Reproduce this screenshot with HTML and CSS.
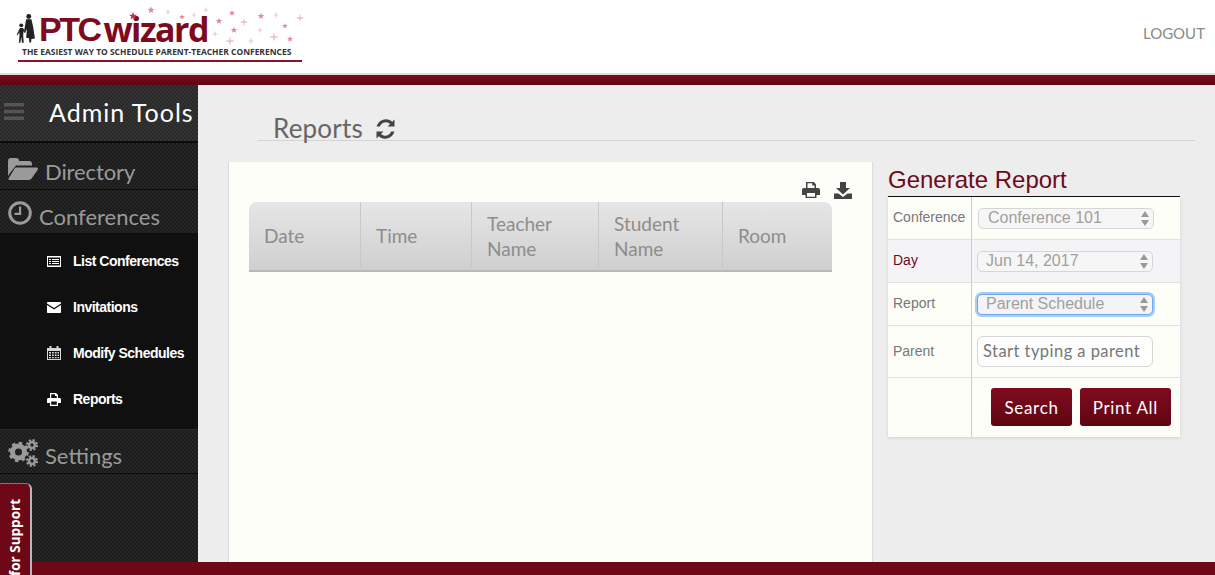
FILE: index.html
```html
<!DOCTYPE html>
<html lang="en">
<head>
<meta charset="utf-8">
<title>PTC Wizard Reports</title>
<link rel="stylesheet" href="styles.css">
</head>
<body>
<svg class="defs" width="0" height="0" aria-hidden="true">
  <defs>
    <path id="star" d="M0-5 1.400-1.700 5-1.500 2.200.8 3.100 4.300 0 2.400-3.100 4.300-2.200.8-5-1.500-1.400-1.700Z"/>
    <path id="plus" d="M-.5-4H.5V-.5H4V.5H.5V4H-.5V.5H-4V-.5H-.5Z"/>
  </defs>
</svg>
<header class="topbar">
  <div class="logo">
    <div class="logo-main">
      <svg class="logo-people" viewBox="0 0 24 34" width="22" height="30" aria-hidden="true">
        <circle cx="14" cy="4" r="2.800" fill="#222"/>
        <path d="M11 7h6l2 9 2 13-4 .4-.4 4.100h-2l-.3-5-3.300-.5 1-10-1.800 3.500-1.500-.8Z" fill="#222"/>
        <circle cx="5.500" cy="14" r="2.200" fill="#222"/>
        <path d="M4 17h3.500l3 5-1 .8-1.500-2-.3 5 .6 8H6.300l-.8-7-1 7H2.800l.7-9-.2-3-2 3.500-1-.7Z" fill="#222"/>
      </svg>
      <span class="logo-ptc">PTC</span><span class="logo-wizard">wizard</span>
      <svg class="logo-stars" viewBox="130 5 175 40" width="175" height="40" aria-hidden="true">
        <use href="#star" fill="#c0394a" transform="translate(133 16) scale(.8)"/>
        <g fill="#dd8d97">
          <use href="#star" transform="translate(151 10) scale(.7)"/>
          <use href="#star" transform="translate(182 17) scale(.55)"/>
          <use href="#star" transform="translate(232 13) scale(.6)"/>
          <use href="#star" transform="translate(261 16) scale(.65)"/>
          <use href="#star" transform="translate(219 21) scale(.65)"/>
          <use href="#star" transform="translate(285 26) scale(.55)"/>
          <use href="#star" transform="translate(234 30) scale(.65)"/>
          <use href="#star" transform="translate(290 39) scale(.6)"/>
        </g>
        <g fill="#e5a3ab">
          <use href="#plus" transform="translate(168 12) scale(.6)"/>
          <use href="#plus" transform="translate(194 15) scale(.6)"/>
          <use href="#plus" transform="translate(206 10) scale(.6)"/>
          <use href="#plus" transform="translate(276 15) scale(.6)"/>
          <use href="#plus" transform="translate(300 18) scale(.8)"/>
          <use href="#plus" transform="translate(244 22) scale(.8)"/>
          <use href="#plus" transform="translate(215 34) scale(.65)"/>
          <use href="#plus" transform="translate(260 30) scale(.65)"/>
          <use href="#plus" transform="translate(230 41) scale(.9)"/>
          <use href="#plus" transform="translate(251 41) scale(.7)"/>
          <use href="#plus" transform="translate(274 37) scale(.9)"/>
        </g>
      </svg>
    </div>
    <div class="logo-tag">THE EASIEST WAY TO SCHEDULE PARENT-TEACHER CONFERENCES</div>
  </div>
  <a class="logout" href="#">LOGOUT</a>
</header>
<div class="stripe"></div>
<div class="body-row">
  <aside class="sidebar">
    <div class="side-title">
      <svg class="burger" viewBox="0 0 24 19" width="20" height="17" preserveAspectRatio="none" aria-hidden="true"><path d="M0 0h24v4H0zM0 7.500h24v4H0zM0 15h24v4H0z" fill="#555"/></svg>
      <span>Admin Tools</span>
    </div>
    <div class="side-section sec-dir">
      <svg viewBox="0 0 30 22" width="30" height="22" aria-hidden="true"><path d="M0 3C0 1 1 0 3 0h5c2 0 3 1 3 2.500V3h10c2 0 3 1 3 3v1.500H8L2 15 0 18ZM8 9.500h20c2 0 2.500 1.300 1.500 2.600L24 20c-.8 1.200-1.800 2-3.500 2H2c-1.500 0-2-1-1-2.300L6 11.500c.6-1.300 1-2 2-2Z" fill="#9a9a9a"/></svg>
      <span class="sec-text">Directory</span>
    </div>
    <div class="side-section sec-conf">
      <svg viewBox="0 0 24 24" width="24" height="24" aria-hidden="true"><circle cx="12" cy="12" r="10.300" fill="none" stroke="#9a9a9a" stroke-width="3"/><path d="M11 5.500h2.200V14H6.500v-2.200H11Z" fill="#9a9a9a"/></svg>
      <span class="sec-text">Conferences</span>
    </div>
    <ul class="side-menu">
      <li>
        <svg viewBox="0 0 14 11" width="14" height="11" aria-hidden="true"><path fill-rule="evenodd" d="M0 0h14v11H0ZM1 1.500v8h12v-8ZM2 3h2v1H2zM5 3h7v1H5zM2 5h2v1H2zM5 5h7v1H5zM2 7h2v1H2zM5 7h7v1H5z" fill="#fff"/></svg>
        <span>List Conferences</span>
      </li>
      <li>
        <svg viewBox="0 0 14 11" width="14" height="11" aria-hidden="true"><path d="M0 1c0-.6.400-1 1-1h12c.6 0 1 .4 1 1v.6L7 6 0 1.600ZM0 3l7 4.400L14 3v7c0 .6-.4 1-1 1H1c-.6 0-1-.4-1-1Z" fill="#fff"/></svg>
        <span>Invitations</span>
      </li>
      <li>
        <svg viewBox="0 0 14 14" width="14" height="14" aria-hidden="true"><path fill-rule="evenodd" d="M2.500 0h2v2h5V0h2v2H14v12H0V2h2.500ZM1 5v8h12V5ZM2 6h2v1.500H2zM5 6h1.800v1.500H5zM7.800 6h1.800v1.500H7.800zM10.500 6H12v1.500h-1.500zM2 8.500h2V10H2zM5 8.500h1.800V10H5zM7.800 8.500h1.800V10H7.800zM10.500 8.500H12V10h-1.500zM2 11h2v1.200H2zM5 11h1.800v1.200H5zM7.800 11h1.800v1.200H7.800zM10.500 11H12v1.200h-1.500z" fill="#d8d8d8"/></svg>
        <span>Modify Schedules</span>
      </li>
      <li>
        <svg viewBox="0 0 14 13" width="14" height="13" aria-hidden="true"><path fill-rule="evenodd" d="M3 0h6l2 2v3h1.500c.9 0 1.500.6 1.500 1.500V10h-3v3H3v-3H0V6.500C0 5.600.6 5 1.500 5H3ZM4.200 1.200V5h5.600V3H8V1.200ZM4.200 8.500v3.300h5.600V8.500Z" fill="#fff"/></svg>
        <span>Reports</span>
      </li>
    </ul>
    <div class="side-section sec-set">
      <svg viewBox="0 0 30 28" width="30" height="28" aria-hidden="true">
        <g fill="none" stroke="#9a9a9a">
          <circle cx="10.500" cy="13" r="6" stroke-width="5"/>
          <circle cx="10.500" cy="13" r="9" stroke-width="2.500" stroke-dasharray="3.500 3.570"/>
          <circle cx="24" cy="6" r="3" stroke-width="2.600"/>
          <circle cx="24" cy="6" r="5" stroke-width="2" stroke-dasharray="2.200 1.730"/>
          <circle cx="24" cy="22" r="3" stroke-width="2.600"/>
          <circle cx="24" cy="22" r="5" stroke-width="2" stroke-dasharray="2.200 1.730"/>
        </g>
      </svg>
      <span class="sec-text">Settings</span>
    </div>
    <div class="support"><span>for Support</span></div>
  </aside>
  <main class="content">
    <h1 class="page-title">Reports
      <svg viewBox="0 0 22 22" width="22" height="22" aria-hidden="true"><path d="M19.500 1.500v7h-7l2.600-2.600A6.500 6.500 0 0 0 4.800 8.500H1.600A9.500 9.500 0 0 1 17.200 3.800ZM1.500 20.500v-7h7l-2.600 2.600a6.500 6.500 0 0 0 10.300-2.600h3.200A9.500 9.500 0 0 1 3.800 18.200Z" fill="#444"/></svg>
    </h1>
    <div class="columns">
      <section class="panel">
        <div class="tools">
          <svg viewBox="0 0 18 16" width="18" height="16" aria-hidden="true"><path fill-rule="evenodd" d="M4 0h8l2 2.500V6h2c1.200 0 2 .8 2 2v5h-3.500v3h-11v-3H0V8c0-1.200.8-2 2-2h2ZM5.500 1.300V6h7V3.500h-2.300V1.300ZM5 11v3.700h8V11Z" fill="#444"/></svg>
          <svg viewBox="0 0 18 17" width="18" height="17" aria-hidden="true"><path d="M6 0h6v6h4l-7 6.500L2 6h4ZM0 11.500h4.500L9 15l4.500-3.500H18V17H0Z" fill="#444"/></svg>
        </div>
        <table class="report-table">
          <thead>
            <tr>
              <th class="c-date">Date</th>
              <th class="c-time">Time</th>
              <th class="c-teach">Teacher Name</th>
              <th class="c-stud">Student Name</th>
              <th class="c-room">Room</th>
            </tr>
          </thead>
        </table>
      </section>
      <section class="generate">
        <h2>Generate Report</h2>
        <div class="form-grid">
          <div class="label r1">Conference</div>
          <div class="field r1"><div class="sel sel-conf">Conference 101<svg viewBox="0 0 8 15" width="8" height="15" aria-hidden="true"><path d="M4 0 8 6H0ZM0 9h8l-4 6Z" fill="#999"/></svg></div></div>
          <div class="label r2 alt day">Day</div>
          <div class="field r2 alt"><div class="sel">Jun 14, 2017<svg viewBox="0 0 8 15" width="8" height="15" aria-hidden="true"><path d="M4 0 8 6H0ZM0 9h8l-4 6Z" fill="#999"/></svg></div></div>
          <div class="label r3">Report</div>
          <div class="field r3"><div class="sel focus">Parent Schedule<svg viewBox="0 0 8 15" width="8" height="15" aria-hidden="true"><path d="M4 0 8 6H0ZM0 9h8l-4 6Z" fill="#999"/></svg></div></div>
          <div class="label r4">Parent</div>
          <div class="field r4"><div class="input">Start typing a parent</div></div>
          <div class="label r5"></div>
          <div class="field r5 actions"><button type="button">Search</button><button type="button">Print All</button></div>
        </div>
      </section>
    </div>
  </main>
</div>
<footer class="footer"></footer>
</body>
</html>
```

FILE: styles.css
```css
* { box-sizing: border-box; }
html, body { margin: 0; height: 100%; }
body {
  display: flex;
  flex-direction: column;
  height: 575px;
  overflow: hidden;
  background: #ededed;
  font-family: "Lato", "Liberation Sans", sans-serif;
}
.defs { position: absolute; }

.topbar {
  height: 73px;
  flex: none;
  background: #fff;
  display: flex;
  justify-content: space-between;
  padding: 0 10px 0 18px;
}
.logo { width: 284px; padding-top: 12px; }
.logo-main { display: flex; align-items: flex-end; height: 33px; position: relative; }
.logo-people { margin: 0 0 2px -2px; flex: none; }
.logo-ptc {
  font: bold 34px/32px "Liberation Sans", sans-serif;
  color: #7d0a1e;
  letter-spacing: -2.500px;
  margin-left: 1px;
}
.logo-wizard {
  font: bold 34px/32px "Open Sans", sans-serif;
  color: #7d0a1e;
  letter-spacing: -1.500px;
  margin-left: 4px;
}
.logo-stars { position: absolute; left: 112px; top: -7px; overflow: visible; }
.logo-tag {
  font: bold 8.450px/10px "Open Sans", sans-serif;
  color: #333;
  white-space: nowrap;
  margin-top: 2px;
  padding-left: 4px;
  padding-bottom: 3px;
  border-bottom: 2px solid #8d1428;
}
.logout {
  font-size: 15px;
  color: #8a8a8a;
  text-decoration: none;
  padding-top: 24px;
}

.stripe {
  height: 12px;
  flex: none;
  border-top: 2px solid #dcdcdc;
  background: linear-gradient(#7c0a1c, #5e0613);
}
.body-row { flex: 1; min-height: 0; display: flex; }

.sidebar {
  width: 198px;
  flex: none;
  position: relative;
  background-color: #1b1b1b;
  background-image:
    linear-gradient(45deg, #262626 25%, transparent 25% 75%, #262626 75%),
    linear-gradient(45deg, #262626 25%, transparent 25% 75%, #262626 75%);
  background-size: 4px 4px;
  background-position: 0 0, 2px 2px;
  color: #9a9a9a;
}
.side-title {
  height: 58px;
  display: flex;
  align-items: center;
  background-color: #292929;
  background-image:
    linear-gradient(45deg, #343434 25%, transparent 25% 75%, #343434 75%),
    linear-gradient(45deg, #343434 25%, transparent 25% 75%, #343434 75%);
  background-size: 4px 4px;
  background-position: 0 0, 2px 2px;
  border-bottom: 2px solid #0c0c0c;
  padding-left: 4px;
  padding-bottom: 3px;
  color: #fff;
  font-size: 25px;
}
.side-title span { margin-left: 25px; white-space: nowrap; letter-spacing: 1px; }
.burger { flex: none; }
.side-section {
  display: flex;
  align-items: center;
  font-size: 22px;
  padding-left: 8px;
  border-bottom: 1px solid #0c0c0c;
}
.sec-dir { height: 47px; padding-top: 5px; gap: 7px; }
.sec-dir .sec-text { margin-top: 6px; letter-spacing: -.1px; }
.sec-conf { height: 44px; gap: 7px; }
.sec-conf svg { margin-top: 3px; }
.sec-conf .sec-text { margin-top: 10px; }
.sec-set { height: 45px; gap: 7px; border-top: 1px solid #2a2a2a; }
.sec-set .sec-text { margin-top: 8px; }
.sec-set svg { margin-top: 3px; }
.side-menu {
  list-style: none;
  margin: 0;
  padding: 4px 0 0;
  height: 195px;
  background: #101010;
}
.side-menu li {
  height: 46px;
  display: flex;
  align-items: center;
  padding-left: 47px;
  gap: 12px;
  color: #fff;
  font: bold 14px/1 "Liberation Sans", sans-serif;
  letter-spacing: -.5px;
}
.side-menu li svg { flex: none; }
.support {
  position: absolute;
  left: 0;
  top: 398px;
  width: 32px;
  height: 92px;
  background: #6d0816;
  border-right: 2px solid #b9b9b9;
  border-top: 1px solid #9c6b72;
  border-radius: 0 6px 0 0;
  overflow: hidden;
  z-index: 1;
}
.support span {
  position: absolute;
  left: 3px;
  top: 15px;
  writing-mode: vertical-rl;
  transform: rotate(180deg);
  color: #fff;
  font: bold 13.500px/24px "Open Sans", sans-serif;
  white-space: nowrap;
}

.content { flex: 1; min-width: 0; padding: 0 20px 0 30px; display: flex; flex-direction: column; }
.page-title {
  margin: 0 0 0 30px;
  height: 56px;
  padding: 32px 0 0 15px;
  border-bottom: 1px solid #d4d4d4;
  font: 400 26px/23px "Lato", sans-serif;
  letter-spacing: .2px;
  color: #666;
  display: flex;
  align-items: center;
  gap: 12px;
}
.columns { flex: 1; min-height: 0; display: flex; margin-top: 21px; gap: 15px; }

.panel {
  width: 645px;
  flex: none;
  background: #fefef9;
  border-left: 1px solid #dcdcdc;
  border-right: 1px solid #dcdcdc;
  padding: 20px 0 0 20px;
}
.tools { height: 20px; width: 603px; display: flex; justify-content: flex-end; gap: 14px; }
.report-table {
  width: 583px;
  border-collapse: separate;
  border-spacing: 0;
  table-layout: fixed;
}
.report-table th {
  height: 70px;
  background: linear-gradient(#e6e6e6, #cfcfcf);
  border-right: 1px solid #c8c8c8;
  border-bottom: 2px solid #b8b8b8;
  color: #8d8d8d;
  font-size: 19px;
  font-weight: 400;
  line-height: 25px;
  text-align: left;
  padding: 0 15px 1px;
}
.report-table th:last-child { border-right: 0; border-top-right-radius: 8px; }
.report-table th:first-child { border-top-left-radius: 8px; }
.c-date { width: 112px; }
.c-time { width: 111px; }
.c-teach { width: 127px; }
.c-stud { width: 124px; }

.generate { width: 292px; flex: none; }
.generate h2 {
  margin: 0;
  height: 35px;
  border-bottom: 1px solid #111;
  font: 400 24px/35px "Liberation Sans", sans-serif;
  color: #6c0a1c;
}
.form-grid {
  display: grid;
  grid-template-columns: 84px 208px;
  grid-template-rows: 43px 43px 43px 52px 59px;
  background: #fefef9;
  box-shadow: 0 1px 3px rgba(0,0,0,.12);
}
.label, .field { display: flex; align-items: center; border-bottom: 1px solid #e2e2e2; }
.label {
  border-right: 1px solid #cdcdcd;
  padding: 0 0 2px 5px;
  font: 14px "Liberation Sans", sans-serif;
  color: #777;
}
.field { padding-left: 5px; }
.alt { background: #f4f4f6; }
.day { color: #6c0a1c; }
.r5 { border-bottom: 0; }
.sel {
  width: 176px;
  height: 21px;
  display: flex;
  justify-content: space-between;
  align-items: center;
  padding: 0 4px 0 8px;
  border: 1px solid #d6d6d6;
  border-radius: 5px;
  background: #f6f6f6;
  color: #a0a0a0;
  font: 16px "Liberation Sans", sans-serif;
}
.sel-conf { margin-left: 1px; padding-left: 9px; }
.focus {
  border-color: #6fa8ee;
  box-shadow: 0 0 0 2px #a9cbf5;
  background: #f4f4f6;
}
.input {
  width: 176px;
  height: 31px;
  border: 1px solid #d6d6d6;
  border-radius: 6px;
  background: #fefefe;
  padding-left: 5px;
  font-size: 16.500px;
  letter-spacing: .45px;
  line-height: 29px;
  color: #777;
  white-space: nowrap;
}
.actions { justify-content: flex-end; gap: 8px; padding: 0 9px 1px 0; }
.actions button {
  height: 38px;
  padding: 0 13px;
  border: 0;
  border-radius: 3px;
  background: linear-gradient(#7f0b1e, #5f0613);
  color: #fff;
  font: 17px "Lato", sans-serif;
  letter-spacing: .7px;
}

.footer { height: 13px; flex: none; background: #6d0816; }
```
